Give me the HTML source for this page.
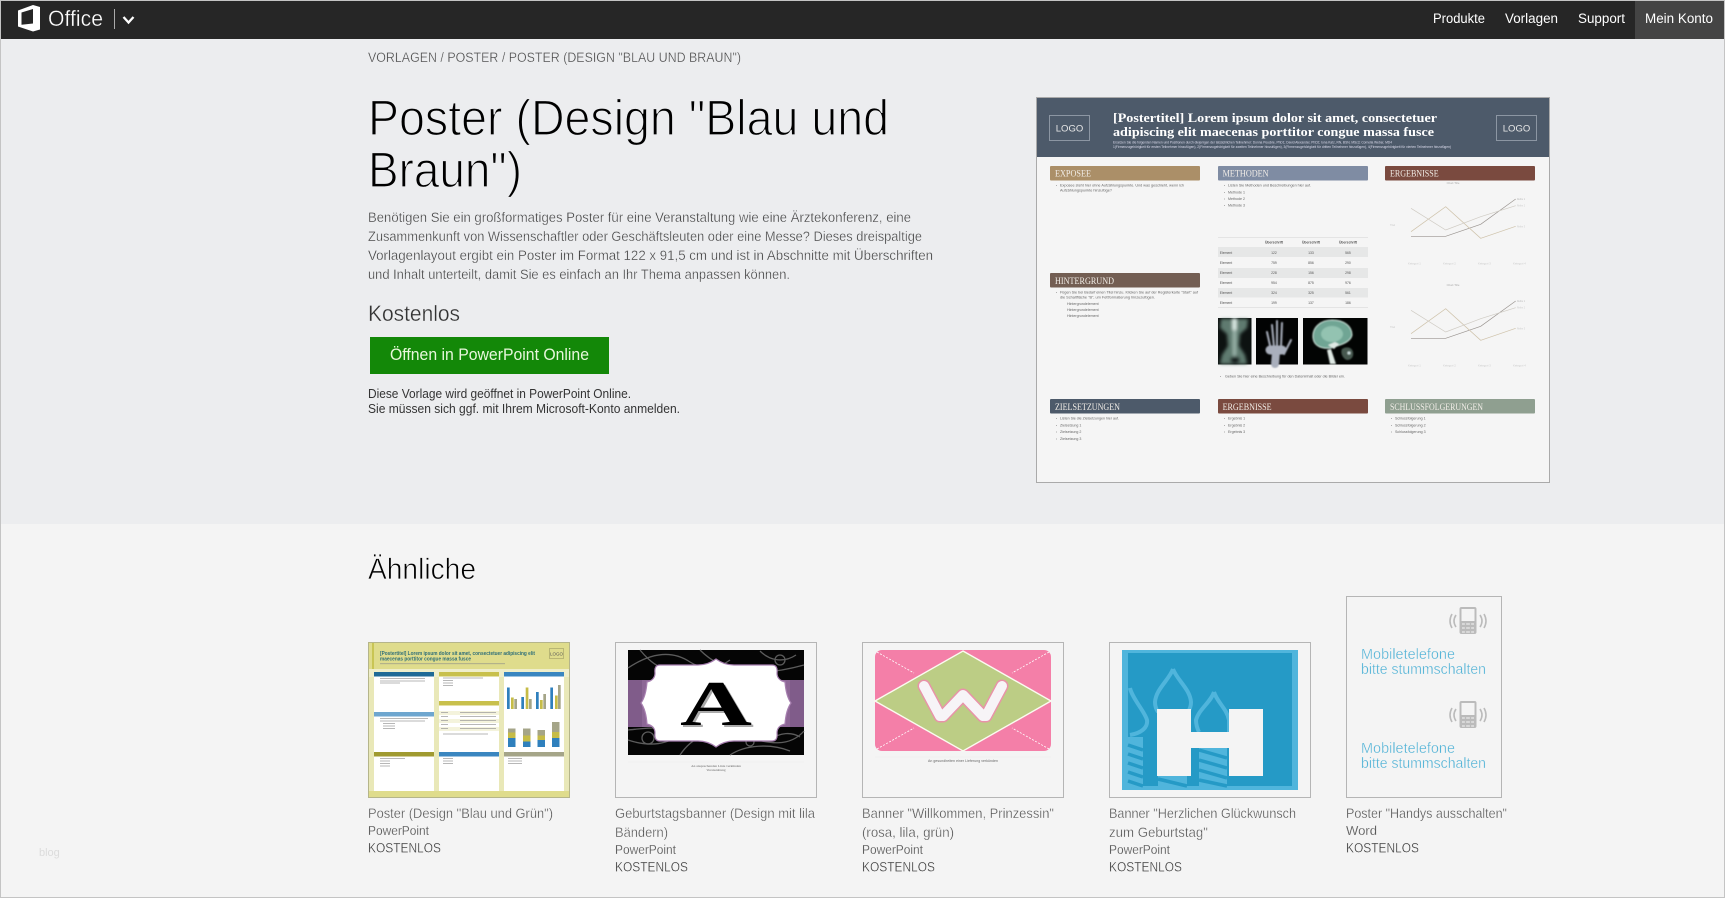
<!DOCTYPE html>
<html lang="de"><head><meta charset="utf-8"><title>Poster (Design "Blau und Braun")</title>
<style>
html,body{margin:0;padding:0;background:#f4f4f4;width:1725px;height:898px;overflow:hidden}
svg{display:block}
text{font-family:"Liberation Sans",sans-serif;white-space:pre}
.s{font-family:"Liberation Serif",serif}
.c{font-size:14px;fill:#505050;stroke:#f4f4f4;stroke-width:.3px}
.k{font-size:14px;fill:#333;stroke:#f4f4f4;stroke-width:.3px}
.p{font-size:12.5px;fill:#555;stroke:#f4f4f4;stroke-width:.15px}
.h{font-family:"Liberation Serif",serif;font-size:9.5px;fill:#f2eee8}
.b{font-size:3.6px;fill:#666}
.nav{font-size:13.5px;fill:#fff}
.hp{font-size:13.5px;fill:#3c3c3c;stroke:#ecedef;stroke-width:.3px}
.th{font-size:3.4px;fill:#555;text-anchor:middle}
</style></head><body>
<svg xmlns="http://www.w3.org/2000/svg" width="1725" height="898" viewBox="0 0 1725 898">
<defs>
<filter id="bl"><feGaussianBlur stdDeviation=".8"/></filter>
<filter id="bl2"><feGaussianBlur stdDeviation="1.6"/></filter>
<g id="ph">
<path d="M-12-6q-4 6 0 12M-16-7q-4 7 0 14M12-6q4 6 0 12M16-7q4 7 0 14" fill="none" stroke="#bbb" stroke-width="1.6"/>
<rect x="-8.5" y="-14" width="17" height="27" rx="2" fill="#bbb"/><rect x="-6.5" y="-12" width="13" height="12" fill="#f4f4f4"/>
<path d="M-6 3h12M-6 7h12M-6 11h12" stroke="#f4f4f4" stroke-width="1"/><path d="M-2.5 2v10M2.500 2v10" stroke="#bbb" stroke-width="1.200"/>
</g>
<g id="chart" fill="none" stroke-width=".7">
<path d="M1411 236.300H1445.700L1480.700 224.300 1515.700 199" stroke="#9a9490"/>
<path d="M1411 231.700L1445.700 206.700 1480.700 238.300 1515.700 226.300" stroke="#cfc3ab"/>
<path d="M1411 208.300L1445.700 230 1480.700 216.700 1515.700 205.700" stroke="#cfcbc3"/>
<text x="1453" y="184" font-size="2.800" fill="#aaa" stroke="none" text-anchor="middle">Chart Title</text>
<text x="1408" y="264.500" font-size="2.800" fill="#ccc" stroke="none">Ketegori 1</text>
<text x="1443" y="264.500" font-size="2.800" fill="#ccc" stroke="none">Ketegori 2</text>
<text x="1478" y="264.500" font-size="2.800" fill="#ccc" stroke="none">Ketegori 3</text>
<text x="1513" y="264.500" font-size="2.800" fill="#ccc" stroke="none">Ketegori 4</text>
<text x="1517" y="200" font-size="2.800" fill="#bbb" stroke="none" textLength="8" lengthAdjust="spacingAndGlyphs">Reihe 1</text>
<text x="1517" y="206.500" font-size="2.800" fill="#ccc" stroke="none" textLength="8" lengthAdjust="spacingAndGlyphs">Reihe 2</text>
<text x="1517" y="227.500" font-size="2.800" fill="#ccc" stroke="none" textLength="8" lengthAdjust="spacingAndGlyphs">Reihe 3</text>
<text x="1390" y="226" font-size="2.800" fill="#ccc" stroke="none">Titel</text>
</g>
</defs>

<!-- backgrounds -->
<rect width="1725" height="898" fill="#f4f4f4"/>
<rect y="39" width="1725" height="485" fill="#ecedef"/>
<rect x=".5" y=".5" width="1724" height="897" fill="none" stroke="#c4c4c4"/>

<!-- nav -->
<rect x="1" y="1" width="1723" height="38" fill="#262626"/>
<rect x="1635" y="1" width="89" height="38" fill="#444"/>
<path d="M18 10.500L33 5l7 2v22.500L33 31.500 18 26.500zM21.500 12.500v12.300l11.500-1.300V9z" fill="#fff" fill-rule="evenodd"/>
<text x="48" y="26" font-size="22.500" fill="#fff" stroke="#262626" stroke-width=".35" textLength="55" lengthAdjust="spacingAndGlyphs">Office</text>
<rect x="114" y="9" width="1" height="20" fill="#aaa"/>
<path d="M123.500 17l5 5.500 5-5.500" fill="none" stroke="#fff" stroke-width="2.300"/>
<text class="nav" x="1433" y="23" textLength="52" lengthAdjust="spacingAndGlyphs">Produkte</text>
<text class="nav" x="1505" y="23" textLength="53" lengthAdjust="spacingAndGlyphs">Vorlagen</text>
<text class="nav" x="1578" y="23" textLength="47" lengthAdjust="spacingAndGlyphs">Support</text>
<text class="nav" x="1645" y="23" textLength="68" lengthAdjust="spacingAndGlyphs">Mein Konto</text>

<!-- hero -->
<text x="368" y="62" font-size="13.500" fill="#444" stroke="#ecedef" stroke-width=".3" textLength="373" lengthAdjust="spacingAndGlyphs">VORLAGEN / POSTER / POSTER (DESIGN "BLAU UND BRAUN")</text>
<text x="368" y="135" font-size="50" fill="#000" stroke="#ecedef" stroke-width="1.300" textLength="521" lengthAdjust="spacingAndGlyphs">Poster (Design "Blau und</text>
<text x="368" y="187" font-size="50" fill="#000" stroke="#ecedef" stroke-width="1.300" textLength="154" lengthAdjust="spacingAndGlyphs">Braun")</text>
<text class="hp" x="368" y="222" textLength="543" lengthAdjust="spacingAndGlyphs">Benötigen Sie ein großformatiges Poster für eine Veranstaltung wie eine Ärztekonferenz, eine</text>
<text class="hp" x="368" y="241" textLength="554" lengthAdjust="spacingAndGlyphs">Zusammenkunft von Wissenschaftler oder Geschäftsleuten oder eine Messe? Dieses dreispaltige</text>
<text class="hp" x="368" y="260" textLength="565" lengthAdjust="spacingAndGlyphs">Vorlagenlayout ergibt ein Poster im Format 122 x 91,5 cm und ist in Abschnitte mit Überschriften</text>
<text class="hp" x="368" y="279" textLength="422" lengthAdjust="spacingAndGlyphs">und Inhalt unterteilt, damit Sie es einfach an Ihr Thema anpassen können.</text>
<text x="368" y="321" font-size="22" fill="#333" stroke="#ecedef" stroke-width=".3" textLength="92" lengthAdjust="spacingAndGlyphs">Kostenlos</text>
<rect x="370" y="337" width="239" height="37" fill="#138808"/>
<text x="390" y="360" font-size="17" fill="#e8f7dc" textLength="199" lengthAdjust="spacingAndGlyphs">Öffnen in PowerPoint Online</text>
<text x="368" y="398" font-size="13" fill="#333" textLength="263" lengthAdjust="spacingAndGlyphs">Diese Vorlage wird geöffnet in PowerPoint Online.</text>
<text x="368" y="413" font-size="13" fill="#333" textLength="312" lengthAdjust="spacingAndGlyphs">Sie müssen sich ggf. mit Ihrem Microsoft-Konto anmelden.</text>

<!-- poster preview -->
<rect x="1036.500" y="97.500" width="513" height="385" fill="#f5f5f5" stroke="#aaa"/>
<rect x="1037" y="98" width="512" height="59" fill="#4d5a6a"/>
<rect x="1049.500" y="115.500" width="40" height="25" fill="none" stroke="#8c96a3"/>
<text x="1069.500" y="131.500" font-size="9.500" fill="#e8e8e8" text-anchor="middle">LOGO</text>
<rect x="1496.500" y="115.500" width="40" height="25" fill="none" stroke="#8c96a3"/>
<text x="1516.500" y="131.500" font-size="9.500" fill="#e8e8e8" text-anchor="middle">LOGO</text>
<text class="s" x="1113" y="122" font-size="13" font-weight="700" fill="#fff" textLength="324" lengthAdjust="spacingAndGlyphs">[Postertitel] Lorem ipsum dolor sit amet, consectetuer</text>
<text class="s" x="1113" y="136" font-size="13" font-weight="700" fill="#fff" textLength="321" lengthAdjust="spacingAndGlyphs">adipiscing elit maecenas porttitor congue massa fusce</text>
<text x="1113" y="143.500" font-size="3.600" fill="#dde" textLength="279" lengthAdjust="spacingAndGlyphs">Ersetzen Sie die folgenden Namen und Positionen durch diejenigen der tatsächlichen Teilnehmer: Donna Peuckle, PhD1; David Alexander, PhD2; Iona Katz, RN, BSN, MSc3; Cornelia Weber, MD4</text>
<text x="1113" y="148" font-size="3.600" fill="#dde" textLength="338" lengthAdjust="spacingAndGlyphs">1(Firmenzugehörigkeit für ersten Teilnehmer hinzufügen), 2(Firmenzugehörigkeit für zweiten Teilnehmer hinzufügen), 3(Firmenzugehörigkeit für dritten Teilnehmer hinzufügen), 4(Firmenzugehörigkeit für vierten Teilnehmer hinzufügen)</text>

<rect x="1050" y="166" width="150" height="14.500" rx="1" fill="#ab8f68"/>
<rect x="1218" y="166" width="150" height="14.500" rx="1" fill="#7f8ca3"/>
<rect x="1385" y="166" width="150" height="14.500" rx="1" fill="#7a4a3f"/>
<rect x="1050" y="273" width="150" height="14.500" rx="1" fill="#735e53"/>
<rect x="1050" y="399" width="150" height="14.500" rx="1" fill="#4d5a6a"/>
<rect x="1218" y="399" width="150" height="14.500" rx="1" fill="#7a4a3f"/>
<rect x="1385" y="399" width="150" height="14.500" rx="1" fill="#8f9f90"/>
<text class="h" x="1055" y="176.500" textLength="36" lengthAdjust="spacingAndGlyphs">EXPOSEE</text>
<text class="h" x="1222.600" y="176.500" textLength="46" lengthAdjust="spacingAndGlyphs">METHODEN</text>
<text class="h" x="1390" y="176.500" textLength="48.600" lengthAdjust="spacingAndGlyphs">ERGEBNISSE</text>
<text class="h" x="1055" y="284" textLength="59" lengthAdjust="spacingAndGlyphs">HINTERGRUND</text>
<text class="h" x="1055" y="410" textLength="65" lengthAdjust="spacingAndGlyphs">ZIELSETZUNGEN</text>
<text class="h" x="1222.600" y="410" textLength="49" lengthAdjust="spacingAndGlyphs">ERGEBNISSE</text>
<text class="h" x="1390" y="410" textLength="93" lengthAdjust="spacingAndGlyphs">SCHLUSSFOLGERUNGEN</text>

<text class="b" x="1060" y="186.500" textLength="124" lengthAdjust="spacingAndGlyphs">Exposee steht hier ohne Aufzählungspunkte. Und was geschieht, wenn ich</text>
<text class="b" x="1060" y="191.500" textLength="52" lengthAdjust="spacingAndGlyphs">Aufzählungspunkte hinzufüge?</text>
<text class="b" x="1228" y="186.500" textLength="83" lengthAdjust="spacingAndGlyphs">Listen Sie Methoden und Beschreibungen hier auf.</text>
<text class="b" x="1228" y="193.500">Methode 1</text>
<text class="b" x="1228" y="200">Methode 2</text>
<text class="b" x="1228" y="206.500">Methode 3</text>
<text class="b" x="1060" y="293.500" textLength="138" lengthAdjust="spacingAndGlyphs">Fügen Sie bei Bedarf einen Titel hinzu. Klicken Sie auf der Registerkarte "Start" auf</text>
<text class="b" x="1060" y="298.500" textLength="95" lengthAdjust="spacingAndGlyphs">die Schaltfläche "B", um Fettformatierung hinzuzufügen.</text>
<text class="b" x="1067" y="305">Hintergrundelement</text>
<text class="b" x="1067" y="311">Hintergrundelement</text>
<text class="b" x="1067" y="317">Hintergrundelement</text>
<text class="b" x="1060" y="419.500">Listen Sie die Zielsetzungen hier auf.</text>
<text class="b" x="1060" y="426.500">Zielsetzung 1</text>
<text class="b" x="1060" y="433">Zielsetzung 2</text>
<text class="b" x="1060" y="440">Zielsetzung 3</text>
<text class="b" x="1228" y="419.500">Ergebnis 1</text>
<text class="b" x="1228" y="426.500">Ergebnis 2</text>
<text class="b" x="1228" y="433">Ergebnis 3</text>
<text class="b" x="1395" y="419.500">Schlussfolgerung 1</text>
<text class="b" x="1395" y="426.500">Schlussfolgerung 2</text>
<text class="b" x="1395" y="433">Schlussfolgerung 3</text>
<text class="b" x="1225" y="377.500" textLength="120" lengthAdjust="spacingAndGlyphs">Geben Sie hier eine Beschreibung für den Dateninhalt oder die Bilder ein.</text>
<path d="M1056 185.500h1M1056 292.500h1M1056 418.500h1M1056 425.500h1M1056 432h1M1056 439h1M1224 185.500h1M1224 192.500h1M1224 199h1M1224 205.500h1M1224 418.500h1M1224 425.500h1M1224 432h1M1391 418.500h1M1391 425.500h1M1391 432h1M1220 376.500h1" stroke="#999" stroke-width=".8"/>

<!-- table -->
<rect x="1218" y="247" width="150" height="10" fill="#e6e7e7"/>
<rect x="1218" y="268" width="150" height="10" fill="#e6e7e7"/>
<rect x="1218" y="288" width="150" height="9.500" fill="#e6e7e7"/>
<path d="M1218 237.500h150M1218 307.500h150" stroke="#e4e4e4"/>
<g>
<text class="th" x="1274" y="243.500" font-weight="700">Überschrift</text><text class="th" x="1311" y="243.500" font-weight="700">Überschrift</text><text class="th" x="1348" y="243.500" font-weight="700">Überschrift</text>
<text class="th" x="1226" y="254">Element</text><text class="th" x="1274" y="254">122</text><text class="th" x="1311" y="254">133</text><text class="th" x="1348" y="254">565</text>
<text class="th" x="1226" y="264">Element</text><text class="th" x="1274" y="264">759</text><text class="th" x="1311" y="264">856</text><text class="th" x="1348" y="264">290</text>
<text class="th" x="1226" y="274">Element</text><text class="th" x="1274" y="274">228</text><text class="th" x="1311" y="274">156</text><text class="th" x="1348" y="274">298</text>
<text class="th" x="1226" y="284">Element</text><text class="th" x="1274" y="284">954</text><text class="th" x="1311" y="284">875</text><text class="th" x="1348" y="284">976</text>
<text class="th" x="1226" y="294">Element</text><text class="th" x="1274" y="294">324</text><text class="th" x="1311" y="294">325</text><text class="th" x="1348" y="294">561</text>
<text class="th" x="1226" y="304">Element</text><text class="th" x="1274" y="304">199</text><text class="th" x="1311" y="304">137</text><text class="th" x="1348" y="304">186</text>
</g>

<!-- x-rays -->
<rect x="1218" y="318" width="33.500" height="46.500" fill="#0d1211"/>
<g filter="url(#bl2)">
<path d="M1221 319h27l-1 9-7 6-1 12 6 9 2 9h-27l2-9 6-9-1-12-7-6z" fill="#5f7a70"/>
<rect x="1232.500" y="318" width="4" height="12" fill="#dfeee8"/>
<rect x="1233" y="330" width="3" height="26" fill="#9fb8ae"/>
<ellipse cx="1235" cy="360" rx="5" ry="3.500" fill="#131c1a"/>
</g>
<rect x="1256" y="318" width="42" height="46.500" fill="#020303"/>
<g filter="url(#bl)" fill="none" stroke="#a9afbc" stroke-linecap="round">
<path d="M1275 364l1-12" stroke-width="8"/>
<path d="M1271 350l-4-18M1274 347l-2-22M1277 347v-26M1281 347l1-24M1284 354l7-14" stroke-width="2"/>
<path d="M1270 350h12" stroke-width="9"/>
</g>
<rect x="1303" y="318" width="64.500" height="46.500" fill="#020403"/>
<g filter="url(#bl)">
<path d="M1313 338c-1-11 8-18 19-18 12 0 20 6 20 15-1 5-6 8-12 10l-9 3c-8 1-17-1-18-10z" fill="#6fa594" stroke="#cde6dc"/>
<ellipse cx="1332" cy="334" rx="11" ry="8" fill="#93c3b1"/>
<path d="M1328 345l7-3 4 2-5 5zM1331 349l5 15h-6l-3-14z" fill="#dfe9e4"/>
<path d="M1342 349c4-3 10-2 11 3s-2 8-6 8c-4-1-7-7-5-11z" fill="#46584f"/>
<circle cx="1349" cy="353" r="1.500" fill="#cdd"/>
</g>

<!-- charts -->
<use href="#chart"/>
<use href="#chart" y="102"/>

<!-- related -->
<text x="368" y="579" font-size="30" fill="#000" stroke="#f4f4f4" stroke-width=".7" textLength="108" lengthAdjust="spacingAndGlyphs">Ähnliche</text>

<!-- thumb 1 -->
<rect x="368.500" y="642.500" width="201" height="155" fill="#e9e8b8" stroke="#b5b58a"/>
<rect x="369" y="643" width="200" height="26" fill="#dfdc8c"/>
<rect x="369" y="669" width="200" height="8" fill="#efeecb"/>
<rect x="372" y="643" width="2" height="26" fill="#c9c554"/>
<rect x="369" y="791" width="200" height="6" fill="#dfdc8c"/>
<rect x="374" y="672" width="60" height="119" fill="#fff"/><rect x="439" y="672" width="60" height="119" fill="#fff"/><rect x="504" y="672" width="60" height="119" fill="#fff"/>
<text x="380" y="655" font-size="5.500" font-weight="700" fill="#2e6e78" textLength="155" lengthAdjust="spacingAndGlyphs">[Postertitel] Lorem ipsum dolor sit amet, consectetuer adipiscing elit</text>
<text x="380" y="660.500" font-size="5.500" font-weight="700" fill="#2e6e78" textLength="91" lengthAdjust="spacingAndGlyphs">maecenas porttitor congue massa fusce</text>
<rect x="549.500" y="648.500" width="14" height="10" fill="none" stroke="#a8a56a" stroke-width=".7"/>
<text x="556.500" y="655.500" font-size="4.500" fill="#555" text-anchor="middle">LOGO</text>
<rect x="380" y="663" width="125" height="1.200" fill="#888" opacity=".5"/>
<rect x="374" y="672" width="60" height="4.500" fill="#1f6a96"/><rect x="439" y="672" width="60" height="4.500" fill="#c8c04c"/><rect x="504" y="672" width="60" height="4.500" fill="#3a86c0"/>
<rect x="374" y="712" width="60" height="4.500" fill="#6ea6cf"/>
<rect x="374" y="752" width="60" height="4.500" fill="#a09a30"/><rect x="439" y="752" width="60" height="4.500" fill="#3a86c0"/><rect x="504" y="752" width="60" height="4.500" fill="#a5a588"/>
<rect x="439" y="701" width="60" height="4.500" fill="#c8c04c"/>
<rect x="439" y="711" width="60" height="4" fill="#f4f3dc"/><rect x="439" y="719" width="60" height="4" fill="#f4f3dc"/><rect x="439" y="727" width="60" height="4" fill="#f4f3dc"/>
<g fill="#999" opacity=".7">
<rect x="380" y="678" width="45" height="1"/><rect x="380" y="680.500" width="45" height="1"/><rect x="380" y="682.500" width="20" height="1"/>
<rect x="380" y="718" width="48" height="1"/><rect x="380" y="720.500" width="45" height="1"/><rect x="383" y="723" width="12" height="1"/><rect x="383" y="725.500" width="12" height="1"/><rect x="383" y="728" width="12" height="1"/>
<rect x="380" y="758" width="25" height="1"/><rect x="380" y="760.500" width="10" height="1"/><rect x="380" y="763" width="10" height="1"/><rect x="380" y="765.500" width="10" height="1"/>
<rect x="443" y="677.500" width="40" height="1"/><rect x="443" y="680" width="10" height="1"/><rect x="443" y="682.500" width="10" height="1"/><rect x="443" y="685" width="10" height="1"/>
<rect x="443" y="758" width="10" height="1"/><rect x="443" y="760.500" width="10" height="1"/><rect x="443" y="763" width="10" height="1"/>
<rect x="443" y="733.500" width="45" height="1"/>
<rect x="508" y="758" width="14" height="1"/><rect x="508" y="760.500" width="14" height="1"/><rect x="508" y="763" width="14" height="1"/>
<rect x="441" y="712" width="7" height="1"/><rect x="441" y="716" width="7" height="1"/><rect x="441" y="720" width="7" height="1"/><rect x="441" y="724" width="7" height="1"/><rect x="441" y="728" width="7" height="1"/>
<rect x="460" y="712" width="36" height="1"/><rect x="460" y="716" width="36" height="1"/><rect x="460" y="720" width="36" height="1"/><rect x="460" y="724" width="36" height="1"/><rect x="460" y="728" width="36" height="1"/>
</g>
<g fill="#2f80bd">
<rect x="507" y="687.500" width="2.700" height="21.500"/><rect x="521.300" y="697" width="2.700" height="12"/><rect x="536" y="692" width="2.700" height="17"/><rect x="550.300" y="687.500" width="2.700" height="21.500"/>
<path d="M508 747v-9h7.500v9zM523 747v-5.500h7.500v5.500zM537.500 747v-7h7.500v7zM552 747v-9h7.500v9z"/>
</g>
<g fill="#c6bc47">
<rect x="511" y="697.500" width="2.700" height="11.500"/><rect x="525.700" y="687.500" width="2.700" height="21.500"/><rect x="540" y="700" width="2.700" height="9"/><rect x="555" y="695.500" width="2.700" height="13.500"/>
<path d="M508 738v-5.500h7.500v5.500zM523 741.500v-6h7.500v6zM537.500 740v-4.500h7.500v4.500zM552 738v-6h7.500v6z"/>
</g>
<g fill="#a5a588">
<rect x="514.300" y="699" width="2.700" height="10"/><rect x="529" y="699" width="2.700" height="10"/><rect x="543.300" y="694" width="2.700" height="15"/><rect x="558" y="685" width="2.700" height="24"/>
<path d="M508 732.500v-4h7.500v4zM523 735.500v-7h7.500v7zM537.500 735.500v-5.500h7.500v5.500zM552 732v-10h7.500v10z"/>
</g>

<!-- thumb 2 -->
<rect x="615.500" y="642.500" width="201" height="155" fill="#f4f4f4" stroke="#b5b5b5"/>
<rect x="628" y="650" width="176" height="105" fill="#050505"/>
<g fill="none" stroke="#5c5c5c" stroke-width="1.300">
<path d="M628 668c30-20 50-14 62-6s30 6 40-2M700 650c20 20 50 30 104 15M760 651c10 10 24 12 36 4M640 650c10 12 20 20 30 18M628 740c30 10 50 0 60-14M680 755c10-15 30-30 60-20s50 12 64-4M770 740c10-8 22-8 30-3M628 730c20-2 30-4 40 2M730 755c15-10 40-12 60-4"/>
<circle cx="780" cy="660" r="5"/><circle cx="648" cy="738" r="6"/><circle cx="750" cy="742" r="4"/>
</g>
<rect x="628" y="680" width="176" height="47" fill="#8d6796"/>
<rect x="628" y="680" width="14" height="47" fill="#6e4d78" opacity=".4"/>
<rect x="790" y="680" width="14" height="47" fill="#6e4d78" opacity=".4"/>
<path d="M660 665h38q10 0 18-6 8 6 18 6h38q6 0 5 8 0 7 8 9 1 14 6 21-5 7-6 21-8 2-8 9 1 8-5 8h-38q-10 0-18 6-8-6-18-6h-38q-6 0-5-8 0-7-8-9-1-14-6-21 5-7 6-21 8-2 8-9-1-8 5-8z" fill="#fff" stroke="#a77fb0" stroke-width="1.200"/>
<text class="s" x="682" y="727" font-size="64" font-weight="700" fill="#aaa" textLength="72" lengthAdjust="spacingAndGlyphs">A</text>
<text class="s" x="680" y="725" font-size="64" font-weight="700" fill="#000" textLength="72" lengthAdjust="spacingAndGlyphs">A</text>
<text class="s" x="716" y="767" font-size="3.500" fill="#666" text-anchor="middle">An ansprechenden Linie verkünden</text>
<text class="s" x="716" y="771" font-size="3.500" fill="#666" text-anchor="middle">Veranstaltung</text>
<path d="M628 762h176" stroke="#efefef"/>

<!-- thumb 3 -->
<rect x="862.500" y="642.500" width="201" height="155" fill="#f4f4f4" stroke="#b5b5b5"/>
<rect x="875" y="650" width="176" height="101" rx="7" fill="#f47fa8"/>
<path d="M877 652l37 21M1049 652l-37 21M877 749l37-21M1049 749l-37-21" stroke="#fff" stroke-width=".8" stroke-dasharray="2 1.500"/>
<path d="M963 651L1051 701 963 751 875 701z" fill="#bccd85" stroke="#fbfbf0" stroke-width="1.400"/>
<path d="M924 686l16 30h3l20-21 20 21h3l16-30" fill="none" stroke="#e893a8" stroke-width="13" stroke-linejoin="round" stroke-linecap="round"/>
<path d="M924 686l16 30h3l20-21 20 21h3l16-30" fill="none" stroke="#f7f4f7" stroke-width="10" stroke-linejoin="round" stroke-linecap="round"/>
<text x="963" y="762" font-size="3.500" fill="#666" text-anchor="middle" textLength="70">An gesundheiten einer Lieferung verkünden</text>
<path d="M875 757h176" stroke="#efefef"/>

<!-- thumb 4 -->
<rect x="1109.500" y="642.500" width="201" height="155" fill="#f4f4f4" stroke="#b5b5b5"/>
<rect x="1122" y="650" width="176" height="140" fill="#50b5dc"/>
<rect x="1128" y="653" width="164" height="133" fill="#259ac6"/>
<g fill="none" stroke="#50b5dc" stroke-width="4">
<path d="M1130 688c2 10 15 24 17 32 1 7-5 13-17 15"/>
<path d="M1173 669c-4 11-17 20-18 33 0 4 1 7 3 10M1173 669c4 11 17 20 18 33 0 4-1 7-3 10"/>
<path d="M1214 692c-3 10-15 17-18 28 0 5 1 8 3 12M1214 692c3 10 13 17 15 28v12"/>
</g>
<path d="M1128 737h15v49h-15zM1158 776h29v10h-29zM1199 748h28v38h-28z" fill="#50b5dc"/>
<g stroke="#259ac6" stroke-width="3.500" fill="none">
<path d="M1128 745l15 5M1128 754l15 5M1128 763l15 5M1128 772l15 5M1128 781l15 5M1158 779l29 7M1199 750l28 8M1199 760l28 8M1199 770l28 8M1199 780l28 6"/>
</g>
<path d="M1157 709h34v23h38v-23h34v67h-34v-28h-38v28h-34z" fill="#f4f4f4"/>

<!-- thumb 5 -->
<rect x="1346.500" y="596.500" width="155" height="201" fill="#f4f4f4" stroke="#b5b5b5"/>
<use href="#ph" x="1468" y="621"/>
<use href="#ph" x="1468" y="715"/>
<text x="1361" y="659" font-size="15" fill="#4fb2d6" stroke="#f4f4f4" stroke-width=".3" textLength="94" lengthAdjust="spacingAndGlyphs">Mobiletelefone</text>
<text x="1361" y="674" font-size="15" fill="#4fb2d6" stroke="#f4f4f4" stroke-width=".3" textLength="125" lengthAdjust="spacingAndGlyphs">bitte stummschalten</text>
<text x="1361" y="753" font-size="15" fill="#4fb2d6" stroke="#f4f4f4" stroke-width=".3" textLength="94" lengthAdjust="spacingAndGlyphs">Mobiletelefone</text>
<text x="1361" y="768" font-size="15" fill="#4fb2d6" stroke="#f4f4f4" stroke-width=".3" textLength="125" lengthAdjust="spacingAndGlyphs">bitte stummschalten</text>

<!-- captions -->
<text class="c" x="368" y="818" textLength="185" lengthAdjust="spacingAndGlyphs">Poster (Design "Blau und Grün")</text>
<text class="p" x="368" y="835" textLength="61" lengthAdjust="spacingAndGlyphs">PowerPoint</text>
<text class="k" x="368" y="852.500" textLength="73" lengthAdjust="spacingAndGlyphs">KOSTENLOS</text>

<text class="c" x="615" y="818" textLength="200" lengthAdjust="spacingAndGlyphs">Geburtstagsbanner (Design mit lila</text>
<text class="c" x="615" y="837" textLength="53" lengthAdjust="spacingAndGlyphs">Bändern)</text>
<text class="p" x="615" y="854" textLength="61" lengthAdjust="spacingAndGlyphs">PowerPoint</text>
<text class="k" x="615" y="871.500" textLength="73" lengthAdjust="spacingAndGlyphs">KOSTENLOS</text>

<text class="c" x="862" y="818" textLength="192" lengthAdjust="spacingAndGlyphs">Banner "Willkommen, Prinzessin"</text>
<text class="c" x="862" y="837" textLength="92" lengthAdjust="spacingAndGlyphs">(rosa, lila, grün)</text>
<text class="p" x="862" y="854" textLength="61" lengthAdjust="spacingAndGlyphs">PowerPoint</text>
<text class="k" x="862" y="871.500" textLength="73" lengthAdjust="spacingAndGlyphs">KOSTENLOS</text>

<text class="c" x="1109" y="818" textLength="187" lengthAdjust="spacingAndGlyphs">Banner "Herzlichen Glückwunsch</text>
<text class="c" x="1109" y="837" textLength="99" lengthAdjust="spacingAndGlyphs">zum Geburtstag"</text>
<text class="p" x="1109" y="854" textLength="61" lengthAdjust="spacingAndGlyphs">PowerPoint</text>
<text class="k" x="1109" y="871.500" textLength="73" lengthAdjust="spacingAndGlyphs">KOSTENLOS</text>

<text class="c" x="1346" y="818" textLength="161" lengthAdjust="spacingAndGlyphs">Poster "Handys ausschalten"</text>
<text class="p" x="1346" y="835" textLength="31" lengthAdjust="spacingAndGlyphs">Word</text>
<text class="k" x="1346" y="852.500" textLength="73" lengthAdjust="spacingAndGlyphs">KOSTENLOS</text>

<text x="39" y="856" font-size="11" fill="#dcdcdc">blog</text>
</svg>
</body></html>
